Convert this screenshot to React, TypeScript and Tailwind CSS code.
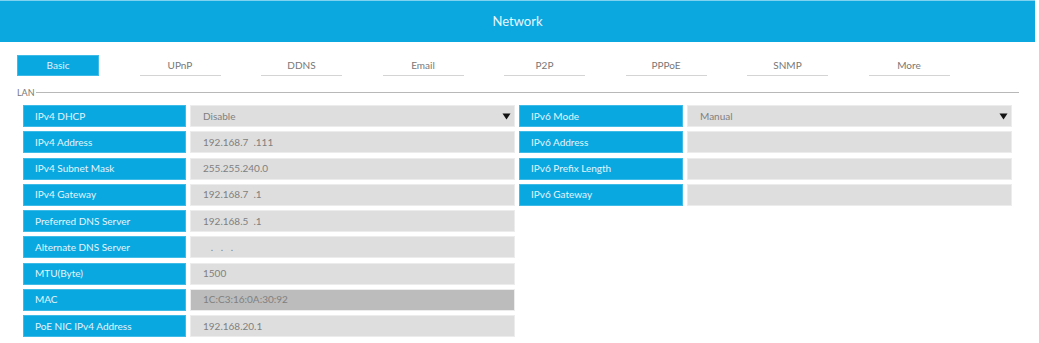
const tabs = ['Basic', 'UPnP', 'DDNS', 'Email', 'P2P', 'PPPoE', 'SNMP', 'More']

type Row = { label: string; value: string; select?: boolean; dim?: boolean }

const left: Row[] = [
	{ label: 'IPv4 DHCP', value: 'Disable', select: true },
	{ label: 'IPv4 Address', value: '192.168.7  .111' },
	{ label: 'IPv4 Subnet Mask', value: '255.255.240.0' },
	{ label: 'IPv4 Gateway', value: '192.168.7  .1' },
	{ label: 'Preferred DNS Server', value: '192.168.5  .1' },
	{ label: 'Alternate DNS Server', value: '   .   .   .' },
	{ label: 'MTU(Byte)', value: '1500' },
	{ label: 'MAC', value: '1C:C3:16:0A:30:92', dim: true },
	{ label: 'PoE NIC IPv4 Address', value: '192.168.20.1' },
]

const right: Row[] = [
	{ label: 'IPv6 Mode', value: 'Manual', select: true },
	{ label: 'IPv6 Address', value: '' },
	{ label: 'IPv6 Prefix Length', value: '' },
	{ label: 'IPv6 Gateway', value: '' },
]

function Field({ row, labelW }: { row: Row; labelW: string }) {
	return (
		<div className="flex h-[22px] gap-[4px]">
			<div
				className={`${labelW} flex items-center border border-[#3fbbe8] bg-[#0aa8e0] pl-[11px] text-[10px] text-[#e3f5fc]`}
			>
				{row.label}
			</div>
			<div
				className={`flex w-[325px] items-center justify-between border border-[#ececec] pl-[12px] pr-[3px] text-[10px] text-[#808080] whitespace-pre ${
					row.dim ? 'bg-[#bcbcbc]' : 'bg-[#dedede]'
				}`}
			>
				<span>{row.value}</span>
				{row.select && (
					<svg width="9" height="8" viewBox="0 0 9 8">
						<path d="M0.5 1.5 H8.5 L4.5 7.5 Z" fill="#111" />
					</svg>
				)}
			</div>
		</div>
	)
}

export default function App() {
	return (
		<div className="h-[343px] w-[1039px] bg-white" style={{ fontFamily: 'Lato, "Liberation Sans", sans-serif' }}>
			{/* Header */}
			<div className="flex h-[42px] w-[1035px] items-center justify-center border-t border-[#7fd2f0] bg-[#0ba8e0] text-[13px] text-[#e8f7fd]">
				Network
			</div>

			{/* Tabs */}
			<div className="mt-[13px] flex gap-[40.5px] pl-[17px]">
				{tabs.map((t, i) =>
					i === 0 ? (
						<div
							key={t}
							className="flex h-[21px] w-[82px] items-center justify-center border border-[#3fbbe8] bg-[#0aa8e0] text-[10px] text-[#dff3fb]"
						>
							{t}
						</div>
					) : (
						<div
							key={t}
							className="flex h-[21px] w-[81px] items-center justify-center border-b border-[#d4d4d4] text-[10px] text-[#777]"
						>
							{t}
						</div>
					)
				)}
			</div>

			{/* LAN divider */}
			<div className="mt-[10px] flex h-[12px] w-[1019px] items-center pl-[17px]">
				<span className="text-[9px] leading-none text-[#777]">LAN</span>
				<div className="ml-[1px] h-px flex-1 bg-[#b8b8b8]" />
			</div>

			{/* Fields */}
			<div className="mt-[7px] flex gap-[4px] pl-[23px]">
				<div className="flex flex-col gap-[4.25px]">
					{left.map((r) => (
						<Field key={r.label} row={r} labelW="w-[163px]" />
					))}
				</div>
				<div className="flex flex-col gap-[4.25px]">
					{right.map((r) => (
						<Field key={r.label} row={r} labelW="w-[164px]" />
					))}
				</div>
			</div>
		</div>
	)
}
